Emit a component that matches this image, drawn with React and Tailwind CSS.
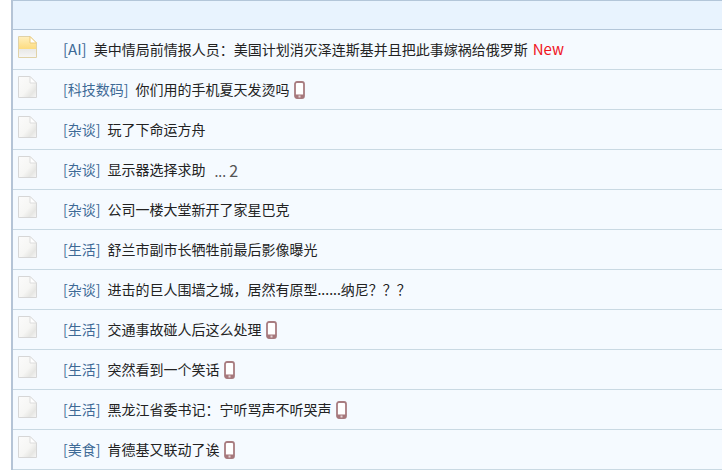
const threads = [
  { tag: "AI", title: "美中情局前情报人员：美国计划消灭泽连斯基并且把此事嫁祸给俄罗斯", isNew: true, hot: true },
  { tag: "科技数码", title: "你们用的手机夏天发烫吗", phone: true },
  { tag: "杂谈", title: "玩了下命运方舟" },
  { tag: "杂谈", title: "显示器选择求助", page: "2" },
  { tag: "杂谈", title: "公司一楼大堂新开了家星巴克" },
  { tag: "生活", title: "舒兰市副市长牺牲前最后影像曝光" },
  { tag: "杂谈", title: "进击的巨人围墙之城，居然有原型......纳尼？？？" },
  { tag: "生活", title: "交通事故碰人后这么处理", phone: true },
  { tag: "生活", title: "突然看到一个笑话", phone: true },
  { tag: "生活", title: "黑龙江省委书记：宁听骂声不听哭声", phone: true },
  { tag: "美食", title: "肯德基又联动了诶", phone: true },
];

function FileIcon({ hot, id }) {
  return (
    <svg width="19" height="22" viewBox="0 0 19 22" className="block">
      <defs>
        <linearGradient id={id} x1="0" y1="0" x2="1" y2="1">
          <stop offset="0" stopColor="#fbfbfb" />
          <stop offset="0.55" stopColor="#f6f6f4" />
          <stop offset="0.78" stopColor="#e6e6e3" />
          <stop offset="1" stopColor="#f8f8f8" />
        </linearGradient>
        <linearGradient id={id + "h"} x1="0" y1="0" x2="0" y2="1">
          <stop offset="0" stopColor="#fff0c0" />
          <stop offset="0.58" stopColor="#fddc80" />
          <stop offset="0.6" stopColor="#e8e8e6" />
          <stop offset="1" stopColor="#f6f6f6" />
        </linearGradient>
      </defs>
      <path
        d="M0.5 0.5H12L18.5 7V21.5H0.5Z"
        fill={hot ? `url(#${id}h)` : `url(#${id})`}
        stroke={hot ? "#e0d2a8" : "#d6d6d6"}
      />
      <path d="M12 0.5V7H18.5Z" fill="#fff" stroke={hot ? "#eccb78" : "#dcdcdc"} />
    </svg>
  );
}

function PhoneIcon() {
  return (
    <svg width="11" height="18" viewBox="0 0 11 18" className="block shrink-0">
      <rect x="1" y="1" width="9" height="16" rx="2" fill="#fff" stroke="#a87c80" strokeWidth="1.8" />
      <rect x="1" y="13.5" width="9" height="3.5" fill="#a6777b" />
      <rect x="4.5" y="14.5" width="2" height="2" fill="#e4d4d5" />
    </svg>
  );
}

export default function App() {
  return (
    <div className="h-[471px] w-[722px] overflow-hidden bg-white font-['Noto_Sans_CJK_SC','Liberation_Sans',sans-serif] text-[14px]">
      <div className="ml-[11px] border-l-2 border-[#b5c4d6]">
        <div className="h-[30px] border-y border-[#b3c6d9] bg-[#e8f3fe]" />
        {threads.map((t, i) => (
          <div key={i} className="flex h-10 items-center border-b border-[#c9d9e3] bg-[#f5faff]">
            <div className="ml-[5px] w-[45px] shrink-0 self-start pt-1.5">
              <FileIcon hot={t.hot} id={`f${i}`} />
            </div>
            {t.tag === "AI" ? (
              <span className="mr-[7px] text-[15px] text-[#3e6a96]">[{t.tag}]</span>
            ) : (
              <span className="mr-[7px] text-[#3e6a96]">[{t.tag}]</span>
            )}
            <span className="text-[#222]">{t.title}</span>
            {t.isNew && <span className="ml-[5px] text-[15px] text-[#f0141e]">New</span>}
            {t.page && (
              <span className="ml-[9px] text-[#555]">
                ... <span className="text-[16px]">{t.page}</span>
              </span>
            )}
            {t.phone && <span className="ml-[5px]"><PhoneIcon /></span>}
          </div>
        ))}
      </div>
    </div>
  );
}
